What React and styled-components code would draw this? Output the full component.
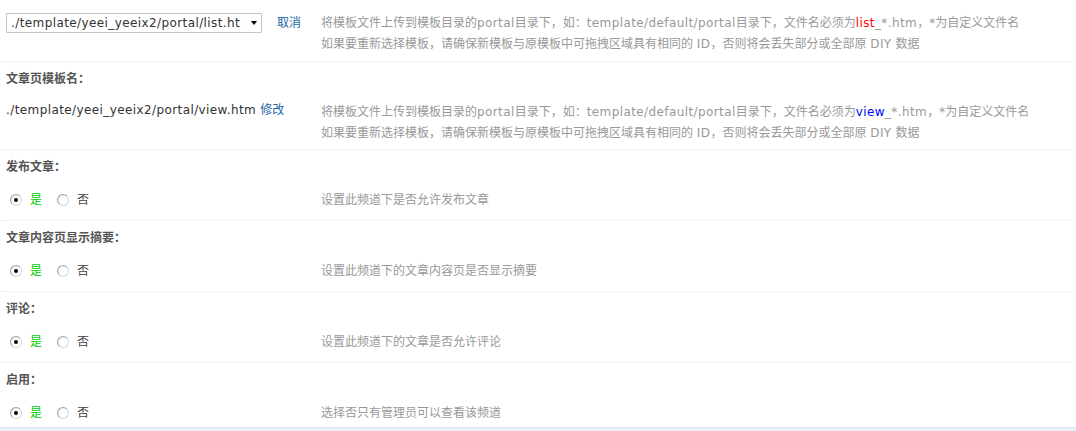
import React from 'react';
import styled, { createGlobalStyle } from 'styled-components';

const GlobalStyle = createGlobalStyle`
    body {
        margin: 0;
        background: #fff;
        font-family: "DejaVu Sans", "Noto Sans CJK SC", sans-serif;
        font-size: 12px;
        color: #333;
    }
`;

const radioSections = [
    { title: '发布文章：', tip: '设置此频道下是否允许发布文章' },
    { title: '文章内容页显示摘要：', tip: '设置此频道下的文章内容页是否显示摘要' },
    { title: '评论：', tip: '设置此频道下的文章是否允许评论' },
    { title: '启用：', tip: '选择否只有管理员可以查看该频道', last: true },
];

const TemplateTip = ({ prefix, color }) => (
    <Tip>
        将模板文件上传到模板目录的<Latin>portal</Latin>目录下，如：<Latin>template/default/portal</Latin>目录下，文件名必须为
        <Mark $color={color}><Latin>{prefix}</Latin></Mark><Latin>_*.htm</Latin>，*为自定义文件名
        <br />
        如果要重新选择模板，请确保新模板与原模板中可拖拽区域具有相同的 <Latin>ID</Latin>，否则将会丢失部分或全部原 <Latin>DIY</Latin> 数据
    </Tip>
);

const RadioPair = () => (
    <Radios>
        <Choice>
            <Radio type="radio" defaultChecked readOnly />
            <YesText>是</YesText>
        </Choice>
        <Choice>
            <Radio type="radio" readOnly />
            <span>否</span>
        </Choice>
    </Radios>
);

const App = () => {
    return (
        <Page>
            <GlobalStyle />
            <Section>
                <ValueRow>
                    <Cell $top={14}>
                        <SelectWrap>
                            <Select defaultValue="list">
                                <option value="list">./template/yeei_yeeix2/portal/list.htm</option>
                            </Select>
                            <Arrow />
                        </SelectWrap>
                        <Link href="#">取消</Link>
                    </Cell>
                    <TipCell $top={13} $bottom={6}>
                        <TemplateTip prefix="list" color="#ff0000" />
                    </TipCell>
                </ValueRow>
            </Section>

            <Section>
                <Header>文章页模板名：</Header>
                <ValueRow>
                    <Cell $top={7}>
                        <Latin>./template/yeei_yeeix2/portal/view.htm</Latin>
                        <Link href="#" $gap>修改</Link>
                    </Cell>
                    <TipCell $top={8} $bottom={5}>
                        <TemplateTip prefix="view" color="#0000ff" />
                    </TipCell>
                </ValueRow>
            </Section>

            {radioSections.map(s => (
                <Section key={s.title} $last={s.last}>
                    <Header>{s.title}</Header>
                    <ValueRow>
                        <Cell $top={9} $bottom={s.last ? 5 : 11}>
                            <RadioPair />
                        </Cell>
                        <TipCell $top={9} $bottom={s.last ? 5 : 11}>
                            <Tip $single>{s.tip}</Tip>
                        </TipCell>
                    </ValueRow>
                </Section>
            ))}
            <Footer />
        </Page>
    );
};

const Page = styled.div`
    width: 1076px;
    height: 431px;
    overflow: hidden;
`;

const Section = styled.div`
    border-bottom: ${p => (p.$last ? 'none' : '1px dotted #deeffb')};
`;

const Header = styled.div`
    padding: 8px 6px 6px;
    line-height: 18px;
    font-weight: bold;
    color: #555;
`;

const ValueRow = styled.div`
    display: grid;
    grid-template-columns: 321px 1fr;
    align-items: start;
`;

const Cell = styled.div`
    display: flex;
    align-items: center;
    height: 18px;
    padding: ${p => p.$top || 0}px 0 ${p => p.$bottom || 0}px 6px;
    line-height: 18px;
    white-space: nowrap;
    color: #333;
`;

const TipCell = styled.div`
    padding: ${p => p.$top || 0}px 0 ${p => p.$bottom || 0}px 0;
`;

const Tip = styled.div`
    line-height: ${p => (p.$single ? 18 : 21)}px;
    color: #999;
    white-space: nowrap;
`;

const Latin = styled.span`
    letter-spacing: 0.4px;
`;

const Mark = styled.span`
    color: ${p => p.$color};
`;

const SelectWrap = styled.div`
    position: relative;
    width: 256px;
    height: 20px;
    margin-right: 15px;
`;

const Select = styled.select`
    appearance: none;
    box-sizing: border-box;
    width: 256px;
    height: 20px;
    padding: 0 20px 0 4px;
    border: 1px solid #c4c4c4;
    border-radius: 1px;
    background: #fff;
    font-family: "DejaVu Sans", sans-serif;
    font-size: 12px;
    letter-spacing: 0.4px;
    color: #333;
    outline: none;
`;

const Arrow = styled.span`
    position: absolute;
    right: 5px;
    top: 8px;
    width: 0;
    height: 0;
    border-left: 3.5px solid transparent;
    border-right: 3.5px solid transparent;
    border-top: 4px solid #000;
    pointer-events: none;
`;

const Link = styled.a`
    margin-left: ${p => (p.$gap ? 4 : 0)}px;
    color: #2366a8;
    text-decoration: none;
`;

const Radios = styled.div`
    display: flex;
    align-items: center;
    padding-left: 4px;
    gap: 15px;
`;

const Choice = styled.label`
    display: flex;
    align-items: center;
    gap: 8px;
    color: #444;
`;

const Radio = styled.input`
    appearance: none;
    margin: 0;
    width: 12px;
    height: 12px;
    border-radius: 50%;
    border: 1px solid #9aa2ac;
    border-right-color: #d5d9de;
    border-bottom-color: #d5d9de;
    background: radial-gradient(circle at 60% 60%, #fff 40%, #e4e6ea 100%);
    box-sizing: border-box;
    position: relative;
    &:checked::after {
        content: '';
        position: absolute;
        left: 3px;
        top: 3px;
        width: 4px;
        height: 4px;
        border-radius: 50%;
        background: #000;
    }
`;

const YesText = styled.span`
    color: #00cc00;
`;

const Footer = styled.div`
    height: 20px;
    background: #e8eef5;
    border-top: 1px solid #dfe7f0;
`;

export default App;
